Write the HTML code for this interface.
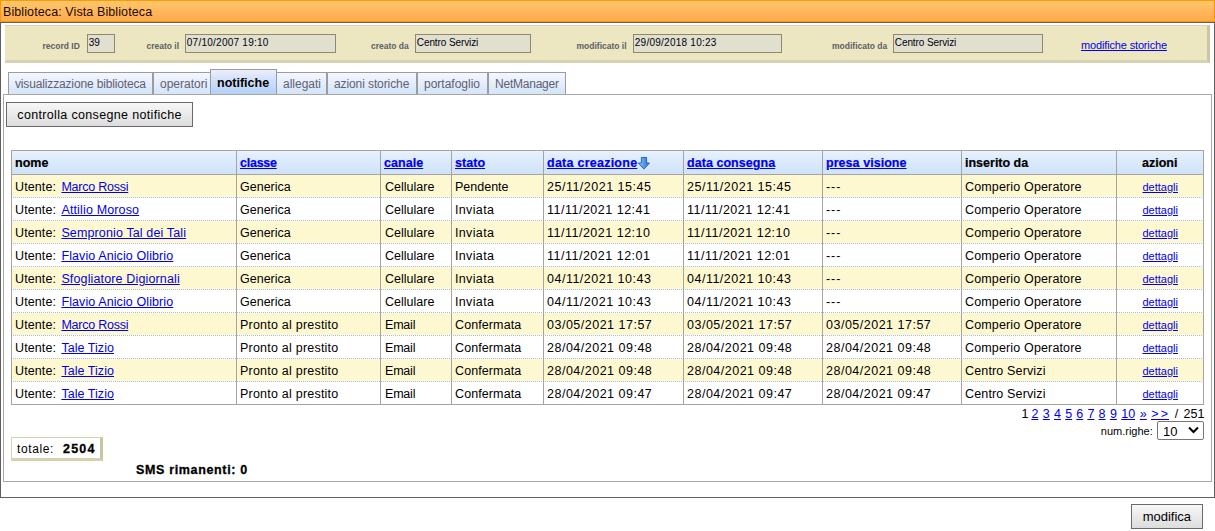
<!DOCTYPE html>
<html><head><meta charset="utf-8"><title>Biblioteca: Vista Biblioteca</title>
<style>
*{box-sizing:border-box}
html,body{margin:0;padding:0}
body{width:1215px;height:531px;position:relative;overflow:hidden;background:#fff;font-family:"Liberation Sans",sans-serif;color:#000}
.ab{position:absolute;white-space:nowrap}
.t{position:absolute;white-space:nowrap;line-height:1}
a{color:#0000ee;text-decoration:underline}
#title{left:0;top:0;width:1215px;height:22px;border:1px solid #ff9900;background:linear-gradient(#ffc76c,#ffa94e)}
#frame{left:0;top:22px;width:1215px;height:476px;border:1px solid #5f5f5f}
#hdr{left:5px;top:25px;width:1205px;height:38px;background:#ece7c1;border-top:1px solid #d9d4b2;border-right:3px solid #c9c5a6;border-bottom:3px solid #d6d2b4}
.lbl{font-size:8.5px;font-weight:bold;color:#6a6a6a}
.inp{position:absolute;height:19px;border:1px solid #8e8872;background:#e1dfcd}
.inpt{font-size:10px;color:#000020}
.tab{position:absolute;top:72px;height:23px;border:1px solid #9c9c9c;border-bottom:none;background:linear-gradient(#f4f7fe,#d3e3f9);}
.tabt{font-size:12px;color:#6d6d80}
#panel{left:3px;top:94px;width:1209px;height:388px;border:1px solid #a8a8a8}
.btn{position:absolute;border:1px solid #6a6a6a;border-radius:0;background:linear-gradient(#f7f7f7,#dddddd)}
</style></head><body>

<div class="ab" id="title"></div>
<div class="t" style="left:3px;top:5.8px;font-size:12.5px;letter-spacing:0.1px;color:#1a0a00">Biblioteca: Vista Biblioteca</div>
<div class="ab" id="frame"></div>
<div class="ab" id="hdr"></div>
<div class="t " style="left:42.5px;top:42.09px;font-size:8.5px;font-weight:bold;color:#5e5e66;letter-spacing:0px">record ID</div>
<div class="t " style="left:146.5px;top:42.09px;font-size:8.5px;font-weight:bold;color:#5e5e66;letter-spacing:0px">creato il</div>
<div class="t " style="left:371px;top:42.09px;font-size:8.5px;font-weight:bold;color:#5e5e66;letter-spacing:0px">creato da</div>
<div class="t " style="left:576.5px;top:42.09px;font-size:8.5px;font-weight:bold;color:#5e5e66;letter-spacing:0px">modificato il</div>
<div class="t " style="left:832px;top:42.09px;font-size:8.5px;font-weight:bold;color:#5e5e66;letter-spacing:0px">modificato da</div>
<div class="inp" style="left:87px;top:34px;width:28px"></div>
<div class="t " style="left:88.8px;top:38.20px;font-size:10px;color:#000010;letter-spacing:-0.1px">39</div>
<div class="inp" style="left:185px;top:34px;width:151px"></div>
<div class="t " style="left:186.8px;top:38.20px;font-size:10px;color:#000010;letter-spacing:0.25px">07/10/2007 19:10</div>
<div class="inp" style="left:415px;top:34px;width:116px"></div>
<div class="t " style="left:416.8px;top:38.20px;font-size:10px;color:#000010;letter-spacing:-0.1px">Centro Servizi</div>
<div class="inp" style="left:633px;top:34px;width:149px"></div>
<div class="t " style="left:634.8px;top:38.20px;font-size:10px;color:#000010;letter-spacing:0.25px">29/09/2018 10:23</div>
<div class="inp" style="left:893px;top:34px;width:150px"></div>
<div class="t " style="left:894.8px;top:38.20px;font-size:10px;color:#000010;letter-spacing:-0.1px">Centro Servizi</div>
<div class="t " style="left:1081px;top:39.54px;font-size:11px;letter-spacing:-0.15px"><a href="#">modifiche storiche</a></div>
<div class="tab" style="left:8px;width:145px"></div>
<div class="tab" style="left:153px;width:58px"></div>
<div class="tab" style="left:276px;width:51px"></div>
<div class="tab" style="left:327px;width:90px"></div>
<div class="tab" style="left:417px;width:71px"></div>
<div class="tab" style="left:488px;width:78px"></div>
<div class="ab" id="panel"></div>
<div class="t " style="left:15px;top:78.18px;font-size:12px;color:#606074;letter-spacing:-0.15px">visualizzazione biblioteca</div>
<div class="t " style="left:160px;top:78.18px;font-size:12px;color:#606074;letter-spacing:0px">operatori</div>
<div class="tab" style="left:210px;top:69px;height:25px;width:67px;background:linear-gradient(#eeeefc,#d4e2fa 35%,#b3d1f8)"></div>
<div class="t " style="left:217px;top:76.75px;font-size:12.5px;font-weight:bold;color:#000">notifiche</div>
<div class="t " style="left:283px;top:78.18px;font-size:12px;color:#606074;letter-spacing:0px">allegati</div>
<div class="t " style="left:334px;top:78.18px;font-size:12px;color:#606074;letter-spacing:-0.1px">azioni storiche</div>
<div class="t " style="left:424px;top:78.18px;font-size:12px;color:#606074;letter-spacing:0px">portafoglio</div>
<div class="t " style="left:495px;top:78.18px;font-size:12px;color:#606074;letter-spacing:-0.23px">NetManager</div>
<div class="btn" style="left:6px;top:102px;width:187px;height:25px"></div>
<div class="t " style="left:17.3px;top:108.65px;font-size:12.5px;letter-spacing:0.34px;color:#000">controlla consegne notifiche</div>
<div class="ab" style="left:11px;top:150px;width:1193px;height:25px;background:linear-gradient(#eef6fe,#e2effd 15%,#cfe2f9)"></div>
<div class="ab" style="left:11px;top:175px;width:1192px;height:22px;background:#fef8d0"></div>
<div class="ab" style="left:13px;top:197px;width:1190px;height:1px;background:repeating-linear-gradient(90deg,#a4bfe2 0 1px,transparent 1px 2px)"></div>
<div class="ab" style="left:11px;top:198px;width:1192px;height:22px;background:#ffffff"></div>
<div class="ab" style="left:13px;top:220px;width:1190px;height:1px;background:repeating-linear-gradient(90deg,#a4bfe2 0 1px,transparent 1px 2px)"></div>
<div class="ab" style="left:11px;top:221px;width:1192px;height:22px;background:#fef8d0"></div>
<div class="ab" style="left:13px;top:243px;width:1190px;height:1px;background:repeating-linear-gradient(90deg,#a4bfe2 0 1px,transparent 1px 2px)"></div>
<div class="ab" style="left:11px;top:244px;width:1192px;height:22px;background:#ffffff"></div>
<div class="ab" style="left:13px;top:266px;width:1190px;height:1px;background:repeating-linear-gradient(90deg,#a4bfe2 0 1px,transparent 1px 2px)"></div>
<div class="ab" style="left:11px;top:267px;width:1192px;height:22px;background:#fef8d0"></div>
<div class="ab" style="left:13px;top:289px;width:1190px;height:1px;background:repeating-linear-gradient(90deg,#a4bfe2 0 1px,transparent 1px 2px)"></div>
<div class="ab" style="left:11px;top:290px;width:1192px;height:22px;background:#ffffff"></div>
<div class="ab" style="left:13px;top:312px;width:1190px;height:1px;background:repeating-linear-gradient(90deg,#a4bfe2 0 1px,transparent 1px 2px)"></div>
<div class="ab" style="left:11px;top:313px;width:1192px;height:22px;background:#fef8d0"></div>
<div class="ab" style="left:13px;top:335px;width:1190px;height:1px;background:repeating-linear-gradient(90deg,#a4bfe2 0 1px,transparent 1px 2px)"></div>
<div class="ab" style="left:11px;top:336px;width:1192px;height:22px;background:#ffffff"></div>
<div class="ab" style="left:13px;top:358px;width:1190px;height:1px;background:repeating-linear-gradient(90deg,#a4bfe2 0 1px,transparent 1px 2px)"></div>
<div class="ab" style="left:11px;top:359px;width:1192px;height:22px;background:#fef8d0"></div>
<div class="ab" style="left:13px;top:381px;width:1190px;height:1px;background:repeating-linear-gradient(90deg,#a4bfe2 0 1px,transparent 1px 2px)"></div>
<div class="ab" style="left:11px;top:382px;width:1192px;height:22px;background:#ffffff"></div>
<div class="ab" style="left:11px;top:150px;width:1193px;height:255px;border:1px solid #a4a4a4"></div>
<div class="ab" style="left:11px;top:174px;width:1193px;height:1px;background:#a4a4a4"></div>
<div class="ab" style="left:236px;top:150px;width:1px;height:254px;background:#a4a4a4"></div>
<div class="ab" style="left:380px;top:150px;width:1px;height:254px;background:#a4a4a4"></div>
<div class="ab" style="left:451px;top:150px;width:1px;height:254px;background:#a4a4a4"></div>
<div class="ab" style="left:543px;top:150px;width:1px;height:254px;background:#a4a4a4"></div>
<div class="ab" style="left:683px;top:150px;width:1px;height:254px;background:#a4a4a4"></div>
<div class="ab" style="left:822px;top:150px;width:1px;height:254px;background:#a4a4a4"></div>
<div class="ab" style="left:961px;top:150px;width:1px;height:254px;background:#a4a4a4"></div>
<div class="ab" style="left:1116px;top:150px;width:1px;height:254px;background:#a4a4a4"></div>
<div class="t " style="left:15px;top:157.05px;font-size:12.5px;font-weight:bold;-webkit-text-stroke-width:0.2px">nome</div>
<div class="t " style="left:240px;top:157.05px;font-size:12.5px;font-weight:bold;letter-spacing:-0.25px;-webkit-text-stroke-width:0.2px"><a href="#">classe</a></div>
<div class="t " style="left:384px;top:157.05px;font-size:12.5px;font-weight:bold;letter-spacing:0.05px;-webkit-text-stroke-width:0.2px"><a href="#">canale</a></div>
<div class="t " style="left:455px;top:157.05px;font-size:12.5px;font-weight:bold;letter-spacing:0.05px;-webkit-text-stroke-width:0.2px"><a href="#">stato</a></div>
<div class="t " style="left:547px;top:157.05px;font-size:12.5px;font-weight:bold;letter-spacing:0.25px;-webkit-text-stroke-width:0.2px"><a href="#">data creazione</a></div>
<div class="t " style="left:687px;top:157.05px;font-size:12.5px;font-weight:bold;letter-spacing:0.05px;-webkit-text-stroke-width:0.2px"><a href="#">data consegna</a></div>
<div class="t " style="left:826px;top:157.05px;font-size:12.5px;font-weight:bold;letter-spacing:0.05px;-webkit-text-stroke-width:0.2px"><a href="#">presa visione</a></div>
<div class="t " style="left:965px;top:157.05px;font-size:12.5px;font-weight:bold;-webkit-text-stroke-width:0.2px">inserito da</div>
<div class="t " style="left:1142px;top:157.05px;font-size:12.5px;font-weight:bold;-webkit-text-stroke-width:0.2px">azioni</div>
<svg class="ab" style="left:637px;top:156px" width="14" height="15" viewBox="0 0 14 15"><defs><linearGradient id="ag" x1="0" x2="1"><stop offset="0" stop-color="#a8d2f8"/><stop offset="0.45" stop-color="#5c9fe8"/><stop offset="1" stop-color="#2c6fcc"/></linearGradient></defs><path d="M4.4 1.45H9.6V7H12.45L6.9 13.1L1.35 7H4.4Z" fill="url(#ag)" stroke="#1d58bc" stroke-width="0.9" stroke-linejoin="miter"/></svg>
<div class="t " style="left:15px;top:181.05px;font-size:12.5px;letter-spacing:0.1px">Utente:</div>
<div class="t " style="left:61.4px;top:181.05px;font-size:12.5px;letter-spacing:-0.24px"><a href="#">Marco Rossi</a></div>
<div class="t " style="left:240px;top:181.05px;font-size:12.5px;letter-spacing:0px">Generica</div>
<div class="t " style="left:385px;top:181.05px;font-size:12.5px;letter-spacing:0px">Cellulare</div>
<div class="t " style="left:455px;top:181.05px;font-size:12.5px;letter-spacing:0px">Pendente</div>
<div class="t " style="left:547px;top:181.05px;font-size:12.5px;letter-spacing:0.5px">25/11/2021 15:45</div>
<div class="t " style="left:687px;top:181.05px;font-size:12.5px;letter-spacing:0.5px">25/11/2021 15:45</div>
<div class="t " style="left:826px;top:181.05px;font-size:12.5px;letter-spacing:0.9px">---</div>
<div class="t " style="left:965px;top:181.05px;font-size:12.5px;letter-spacing:0.15px">Comperio Operatore</div>
<div class="t " style="left:1142.5px;top:182.34px;font-size:11px;"><a href="#">dettagli</a></div>
<div class="t " style="left:15px;top:204.05px;font-size:12.5px;letter-spacing:0.1px">Utente:</div>
<div class="t " style="left:61.4px;top:204.05px;font-size:12.5px;letter-spacing:0.15px"><a href="#">Attilio Moroso</a></div>
<div class="t " style="left:240px;top:204.05px;font-size:12.5px;letter-spacing:0px">Generica</div>
<div class="t " style="left:385px;top:204.05px;font-size:12.5px;letter-spacing:0px">Cellulare</div>
<div class="t " style="left:455px;top:204.05px;font-size:12.5px;letter-spacing:0.35px">Inviata</div>
<div class="t " style="left:547px;top:204.05px;font-size:12.5px;letter-spacing:0.5px">11/11/2021 12:41</div>
<div class="t " style="left:687px;top:204.05px;font-size:12.5px;letter-spacing:0.5px">11/11/2021 12:41</div>
<div class="t " style="left:826px;top:204.05px;font-size:12.5px;letter-spacing:0.9px">---</div>
<div class="t " style="left:965px;top:204.05px;font-size:12.5px;letter-spacing:0.15px">Comperio Operatore</div>
<div class="t " style="left:1142.5px;top:205.34px;font-size:11px;"><a href="#">dettagli</a></div>
<div class="t " style="left:15px;top:227.05px;font-size:12.5px;letter-spacing:0.1px">Utente:</div>
<div class="t " style="left:61.4px;top:227.05px;font-size:12.5px;letter-spacing:0.13px"><a href="#">Sempronio Tal dei Tali</a></div>
<div class="t " style="left:240px;top:227.05px;font-size:12.5px;letter-spacing:0px">Generica</div>
<div class="t " style="left:385px;top:227.05px;font-size:12.5px;letter-spacing:0px">Cellulare</div>
<div class="t " style="left:455px;top:227.05px;font-size:12.5px;letter-spacing:0.35px">Inviata</div>
<div class="t " style="left:547px;top:227.05px;font-size:12.5px;letter-spacing:0.5px">11/11/2021 12:10</div>
<div class="t " style="left:687px;top:227.05px;font-size:12.5px;letter-spacing:0.5px">11/11/2021 12:10</div>
<div class="t " style="left:826px;top:227.05px;font-size:12.5px;letter-spacing:0.9px">---</div>
<div class="t " style="left:965px;top:227.05px;font-size:12.5px;letter-spacing:0.15px">Comperio Operatore</div>
<div class="t " style="left:1142.5px;top:228.34px;font-size:11px;"><a href="#">dettagli</a></div>
<div class="t " style="left:15px;top:250.05px;font-size:12.5px;letter-spacing:0.1px">Utente:</div>
<div class="t " style="left:61.4px;top:250.05px;font-size:12.5px;letter-spacing:0.1px"><a href="#">Flavio Anicio Olibrio</a></div>
<div class="t " style="left:240px;top:250.05px;font-size:12.5px;letter-spacing:0px">Generica</div>
<div class="t " style="left:385px;top:250.05px;font-size:12.5px;letter-spacing:0px">Cellulare</div>
<div class="t " style="left:455px;top:250.05px;font-size:12.5px;letter-spacing:0.35px">Inviata</div>
<div class="t " style="left:547px;top:250.05px;font-size:12.5px;letter-spacing:0.5px">11/11/2021 12:01</div>
<div class="t " style="left:687px;top:250.05px;font-size:12.5px;letter-spacing:0.5px">11/11/2021 12:01</div>
<div class="t " style="left:826px;top:250.05px;font-size:12.5px;letter-spacing:0.9px">---</div>
<div class="t " style="left:965px;top:250.05px;font-size:12.5px;letter-spacing:0.15px">Comperio Operatore</div>
<div class="t " style="left:1142.5px;top:251.34px;font-size:11px;"><a href="#">dettagli</a></div>
<div class="t " style="left:15px;top:273.05px;font-size:12.5px;letter-spacing:0.1px">Utente:</div>
<div class="t " style="left:61.4px;top:273.05px;font-size:12.5px;letter-spacing:0.14px"><a href="#">Sfogliatore Digiornali</a></div>
<div class="t " style="left:240px;top:273.05px;font-size:12.5px;letter-spacing:0px">Generica</div>
<div class="t " style="left:385px;top:273.05px;font-size:12.5px;letter-spacing:0px">Cellulare</div>
<div class="t " style="left:455px;top:273.05px;font-size:12.5px;letter-spacing:0.35px">Inviata</div>
<div class="t " style="left:547px;top:273.05px;font-size:12.5px;letter-spacing:0.5px">04/11/2021 10:43</div>
<div class="t " style="left:687px;top:273.05px;font-size:12.5px;letter-spacing:0.5px">04/11/2021 10:43</div>
<div class="t " style="left:826px;top:273.05px;font-size:12.5px;letter-spacing:0.9px">---</div>
<div class="t " style="left:965px;top:273.05px;font-size:12.5px;letter-spacing:0.15px">Comperio Operatore</div>
<div class="t " style="left:1142.5px;top:274.34px;font-size:11px;"><a href="#">dettagli</a></div>
<div class="t " style="left:15px;top:296.05px;font-size:12.5px;letter-spacing:0.1px">Utente:</div>
<div class="t " style="left:61.4px;top:296.05px;font-size:12.5px;letter-spacing:0.1px"><a href="#">Flavio Anicio Olibrio</a></div>
<div class="t " style="left:240px;top:296.05px;font-size:12.5px;letter-spacing:0px">Generica</div>
<div class="t " style="left:385px;top:296.05px;font-size:12.5px;letter-spacing:0px">Cellulare</div>
<div class="t " style="left:455px;top:296.05px;font-size:12.5px;letter-spacing:0.35px">Inviata</div>
<div class="t " style="left:547px;top:296.05px;font-size:12.5px;letter-spacing:0.5px">04/11/2021 10:43</div>
<div class="t " style="left:687px;top:296.05px;font-size:12.5px;letter-spacing:0.5px">04/11/2021 10:43</div>
<div class="t " style="left:826px;top:296.05px;font-size:12.5px;letter-spacing:0.9px">---</div>
<div class="t " style="left:965px;top:296.05px;font-size:12.5px;letter-spacing:0.15px">Comperio Operatore</div>
<div class="t " style="left:1142.5px;top:297.34px;font-size:11px;"><a href="#">dettagli</a></div>
<div class="t " style="left:15px;top:319.05px;font-size:12.5px;letter-spacing:0.1px">Utente:</div>
<div class="t " style="left:61.4px;top:319.05px;font-size:12.5px;letter-spacing:-0.24px"><a href="#">Marco Rossi</a></div>
<div class="t " style="left:240px;top:319.05px;font-size:12.5px;letter-spacing:0.22px">Pronto al prestito</div>
<div class="t " style="left:385px;top:319.05px;font-size:12.5px;letter-spacing:-0.2px">Email</div>
<div class="t " style="left:455px;top:319.05px;font-size:12.5px;letter-spacing:0.1px">Confermata</div>
<div class="t " style="left:547px;top:319.05px;font-size:12.5px;letter-spacing:0.5px">03/05/2021 17:57</div>
<div class="t " style="left:687px;top:319.05px;font-size:12.5px;letter-spacing:0.5px">03/05/2021 17:57</div>
<div class="t " style="left:826px;top:319.05px;font-size:12.5px;letter-spacing:0.5px">03/05/2021 17:57</div>
<div class="t " style="left:965px;top:319.05px;font-size:12.5px;letter-spacing:0.15px">Comperio Operatore</div>
<div class="t " style="left:1142.5px;top:320.34px;font-size:11px;"><a href="#">dettagli</a></div>
<div class="t " style="left:15px;top:342.05px;font-size:12.5px;letter-spacing:0.1px">Utente:</div>
<div class="t " style="left:61.4px;top:342.05px;font-size:12.5px;letter-spacing:0.05px"><a href="#">Tale Tizio</a></div>
<div class="t " style="left:240px;top:342.05px;font-size:12.5px;letter-spacing:0.22px">Pronto al prestito</div>
<div class="t " style="left:385px;top:342.05px;font-size:12.5px;letter-spacing:-0.2px">Email</div>
<div class="t " style="left:455px;top:342.05px;font-size:12.5px;letter-spacing:0.1px">Confermata</div>
<div class="t " style="left:547px;top:342.05px;font-size:12.5px;letter-spacing:0.5px">28/04/2021 09:48</div>
<div class="t " style="left:687px;top:342.05px;font-size:12.5px;letter-spacing:0.5px">28/04/2021 09:48</div>
<div class="t " style="left:826px;top:342.05px;font-size:12.5px;letter-spacing:0.5px">28/04/2021 09:48</div>
<div class="t " style="left:965px;top:342.05px;font-size:12.5px;letter-spacing:0.15px">Comperio Operatore</div>
<div class="t " style="left:1142.5px;top:343.34px;font-size:11px;"><a href="#">dettagli</a></div>
<div class="t " style="left:15px;top:365.05px;font-size:12.5px;letter-spacing:0.1px">Utente:</div>
<div class="t " style="left:61.4px;top:365.05px;font-size:12.5px;letter-spacing:0.05px"><a href="#">Tale Tizio</a></div>
<div class="t " style="left:240px;top:365.05px;font-size:12.5px;letter-spacing:0.22px">Pronto al prestito</div>
<div class="t " style="left:385px;top:365.05px;font-size:12.5px;letter-spacing:-0.2px">Email</div>
<div class="t " style="left:455px;top:365.05px;font-size:12.5px;letter-spacing:0.1px">Confermata</div>
<div class="t " style="left:547px;top:365.05px;font-size:12.5px;letter-spacing:0.5px">28/04/2021 09:48</div>
<div class="t " style="left:687px;top:365.05px;font-size:12.5px;letter-spacing:0.5px">28/04/2021 09:48</div>
<div class="t " style="left:826px;top:365.05px;font-size:12.5px;letter-spacing:0.5px">28/04/2021 09:48</div>
<div class="t " style="left:965px;top:365.05px;font-size:12.5px;letter-spacing:0.15px">Centro Servizi</div>
<div class="t " style="left:1142.5px;top:366.34px;font-size:11px;"><a href="#">dettagli</a></div>
<div class="t " style="left:15px;top:388.05px;font-size:12.5px;letter-spacing:0.1px">Utente:</div>
<div class="t " style="left:61.4px;top:388.05px;font-size:12.5px;letter-spacing:0.05px"><a href="#">Tale Tizio</a></div>
<div class="t " style="left:240px;top:388.05px;font-size:12.5px;letter-spacing:0.22px">Pronto al prestito</div>
<div class="t " style="left:385px;top:388.05px;font-size:12.5px;letter-spacing:-0.2px">Email</div>
<div class="t " style="left:455px;top:388.05px;font-size:12.5px;letter-spacing:0.1px">Confermata</div>
<div class="t " style="left:547px;top:388.05px;font-size:12.5px;letter-spacing:0.5px">28/04/2021 09:47</div>
<div class="t " style="left:687px;top:388.05px;font-size:12.5px;letter-spacing:0.5px">28/04/2021 09:47</div>
<div class="t " style="left:826px;top:388.05px;font-size:12.5px;letter-spacing:0.5px">28/04/2021 09:47</div>
<div class="t " style="left:965px;top:388.05px;font-size:12.5px;letter-spacing:0.15px">Centro Servizi</div>
<div class="t " style="left:1142.5px;top:389.34px;font-size:11px;"><a href="#">dettagli</a></div>
<div class="t " style="left:1021.5px;top:408.15px;font-size:12.5px;">1</div>
<div class="t " style="left:1031.4px;top:408.15px;font-size:12.5px;"><a href="#">2</a></div>
<div class="t " style="left:1042.8px;top:408.15px;font-size:12.5px;"><a href="#">3</a></div>
<div class="t " style="left:1054.0px;top:408.15px;font-size:12.5px;"><a href="#">4</a></div>
<div class="t " style="left:1065.2px;top:408.15px;font-size:12.5px;"><a href="#">5</a></div>
<div class="t " style="left:1076.3px;top:408.15px;font-size:12.5px;"><a href="#">6</a></div>
<div class="t " style="left:1087.4px;top:408.15px;font-size:12.5px;"><a href="#">7</a></div>
<div class="t " style="left:1098.6000000000001px;top:408.15px;font-size:12.5px;"><a href="#">8</a></div>
<div class="t " style="left:1109.9px;top:408.15px;font-size:12.5px;"><a href="#">9</a></div>
<div class="t " style="left:1121.2px;top:408.15px;font-size:12.5px;"><a href="#">10</a></div>
<div class="t " style="left:1139.8px;top:408.15px;font-size:12.5px;"><a href="#">&raquo;</a></div>
<div class="t " style="left:1183.6000000000001px;top:408.15px;font-size:12.5px;">251</div>
<div class="t " style="left:1174.7px;top:408.15px;font-size:12.5px;">/</div>
<div class="t" style="left:1151.2px;top:408.15px;font-size:12.5px;color:#0000ee;letter-spacing:2.2px">&gt;&gt;</div>
<div class="ab" style="left:1150.8px;top:419px;width:18.6px;height:1px;background:#0000ee"></div>
<div class="t " style="left:1100.8px;top:426.44px;font-size:11px;">num.righe:</div>
<div class="ab" style="left:1157px;top:421px;width:47px;height:19px;border:1px solid #767676;border-radius:2px;background:#fff"></div>
<div class="t " style="left:1163px;top:424.72px;font-size:13px;">10</div>
<svg class="ab" style="left:1188px;top:426px" width="11" height="8" viewBox="0 0 11 8"><path d="M1 1.5L5.5 6L10 1.5" fill="none" stroke="#000" stroke-width="2"/></svg>
<div class="ab" style="left:11px;top:437px;width:92px;height:24px;background:#fff;border-top:1px solid #d8d3b0;border-left:1px solid #d8d3b0;border-right:3px solid #c9c5a3;border-bottom:3px solid #d6d1ae"></div>
<div class="t " style="left:17px;top:442.88px;font-size:12px;letter-spacing:0.6px">totale:</div>
<div class="t " style="left:63px;top:443.25px;font-size:12.5px;font-weight:bold;letter-spacing:1.2px;-webkit-text-stroke:0.3px #000">2504</div>
<div class="t " style="left:136px;top:463.75px;font-size:12.5px;font-weight:bold;letter-spacing:0.65px;-webkit-text-stroke:0.3px #000">SMS rimanenti: 0</div>
<div class="btn" style="left:1131px;top:504px;width:72px;height:25px"></div>
<div class="t " style="left:1142.7px;top:509.62px;font-size:13px;">modifica</div>
</body></html>
